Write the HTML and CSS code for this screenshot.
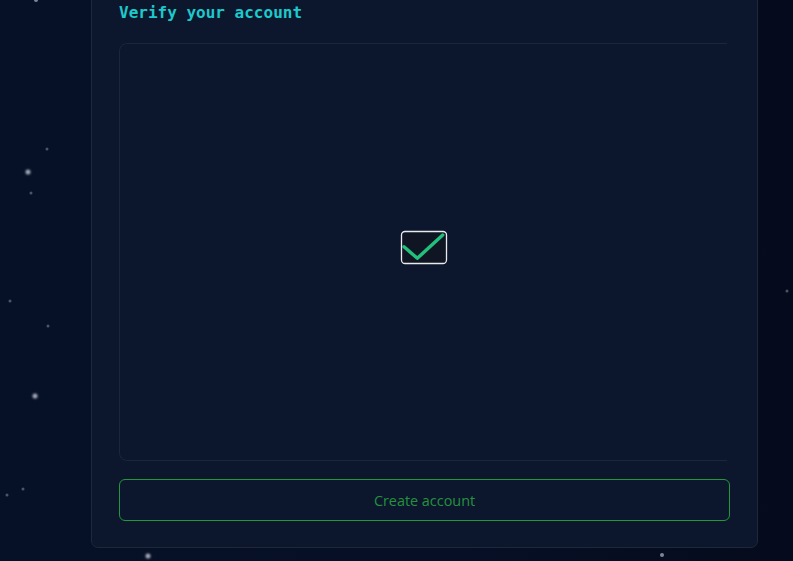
FILE: index.html
```html
<!DOCTYPE html>
<html>
<head>
<meta charset="utf-8">
<link rel="stylesheet" href="styles.css">
</head>
<body>
<div class="stars">
  <span class="star s2" style="left:36px;top:0px"></span>
  <span class="star s1" style="left:47px;top:149px"></span>
  <span class="star s3" style="left:28px;top:172px"></span>
  <span class="star s1" style="left:31px;top:193px"></span>
  <span class="star s1" style="left:10px;top:301px"></span>
  <span class="star s1" style="left:48px;top:326px"></span>
  <span class="star s3" style="left:35px;top:396px"></span>
  <span class="star s1" style="left:23px;top:489px"></span>
  <span class="star s1" style="left:7px;top:495px"></span>
  <span class="star s3" style="left:148px;top:556px"></span>
  <span class="star s2" style="left:662px;top:555px"></span>
  <span class="star s1" style="left:787px;top:291px"></span>
</div>
<main class="card">
  <h2 class="title">Verify your account</h2>
  <div class="frame-clip">
    <div class="frame">
      <div class="frame-inner">
        <svg class="check" width="48" height="37" viewBox="0 0 48 37">
          <rect x="1.5" y="2.5" width="45" height="32" rx="3.5" fill="#0f1522" stroke="#e8eaee" stroke-width="1.3"/>
          <polyline points="4,17.7 17.3,29.3 42.7,6" fill="none" stroke="#21c07c" stroke-width="3.4" stroke-linecap="round" stroke-linejoin="round"/>
        </svg>
      </div>
    </div>
  </div>
  <button class="btn">Create account</button>
</main>
</body>
</html>
```
FILE: styles.css
```css
html, body {
  margin: 0;
  padding: 0;
}
body {
  width: 793px;
  height: 561px;
  overflow: hidden;
  position: relative;
  background: linear-gradient(90deg, #061026 0%, #060f25 60%, #050b1c 100%);
  font-family: "Open Sans", "Noto Sans", sans-serif;
}
.stars {
  position: absolute;
  inset: 0;
  pointer-events: none;
}
.star {
  position: absolute;
  border-radius: 50%;
  background: #cfd6e2;
  transform: translate(-50%, -50%);
}
.s1 { width: 3px; height: 3px; opacity: 0.35; filter: blur(0.6px); }
.s2 { width: 4px; height: 4px; opacity: 0.6; filter: blur(0.6px); }
.s3 { width: 5px; height: 5px; opacity: 0.8; filter: blur(0.8px); }

.card {
  position: relative;
  box-sizing: border-box;
  width: 667px;
  margin: -20px 0 0 91px;
  padding: 22px 26px 26px 27px;
  background: #0c172d;
  border: 1px solid #1d2839;
  border-radius: 7px;
}
.title {
  margin: 0 0 21px 0;
  font-family: "DejaVu Sans Mono", monospace;
  font-weight: bold;
  font-size: 16px;
  line-height: 19px;
  color: #1cc9cb;
}
.frame-clip {
  width: 608px;
  height: 418px;
  overflow: hidden;
}
.frame {
  box-sizing: border-box;
  width: 640px;
  height: 418px;
  border: 1px solid #1b2638;
  border-radius: 8px;
}
.frame-inner {
  width: 607px;
  display: flex;
  justify-content: center;
  padding-top: 185px;
}
.check {
  display: block;
}
.btn {
  display: block;
  box-sizing: border-box;
  width: 611px;
  height: 42px;
  margin-top: 18px;
  background: transparent;
  border: 1px solid #23973b;
  border-radius: 6px;
  color: #25913e;
  font-family: "Open Sans", "Noto Sans", sans-serif;
  font-size: 14.4px;
  padding: 0;
}
```
